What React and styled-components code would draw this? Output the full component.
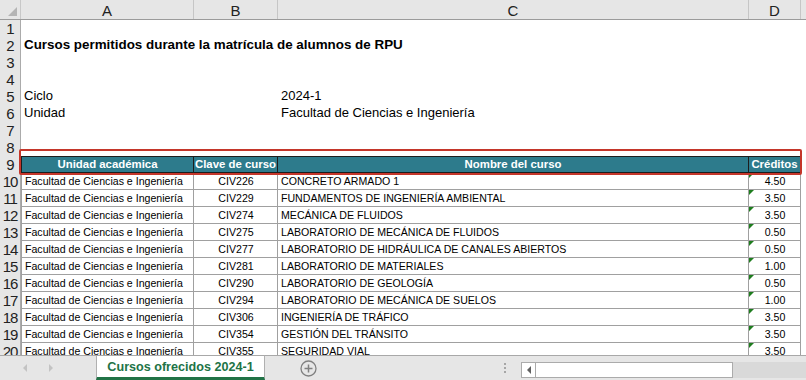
import React from "react";
import styled, { createGlobalStyle } from "styled-components";

const GlobalStyle = createGlobalStyle`
  html, body { margin: 0; padding: 0; background: #ffffff; overflow: hidden; }
  * { box-sizing: border-box; }
`;

const COLS = "21px 173px 84px 471px 52px 1fr";

const Window = styled.div`
  width: 806px;
  height: 380px;
  display: flex;
  flex-direction: column;
  font-family: "Liberation Sans", Arial, sans-serif;
  color: #000;
  overflow: hidden;
`;

const ColHeaderRow = styled.div`
  display: grid;
  grid-template-columns: ${COLS};
  height: 20px;
  flex: none;
  background: #e6e6e6;
  border-bottom: 1px solid #9b9b9b;
`;

const Corner = styled.div`
  position: relative;
  border-right: 1px solid #c8c8c8;
  &::after {
    content: "";
    position: absolute;
    right: 3px;
    bottom: 3px;
    width: 0;
    height: 0;
    border-left: 9px solid transparent;
    border-bottom: 9px solid #b4b4b4;
  }
`;

const ColLetter = styled.div`
  display: flex;
  align-items: center;
  justify-content: center;
  font-size: 15px;
  color: #222;
  padding-top: 1px;
  border-right: ${(p) => (p.$last ? "none" : "1px solid #c6c6c6")};
`;

const SheetBody = styled.div`
  position: relative;
  flex: 1;
  overflow: hidden;
`;

const Row = styled.div`
  display: grid;
  grid-template-columns: ${COLS};
  height: 17px;
`;

const RowNum = styled.div`
  background: #e6e6e6;
  border-right: 1px solid #ababab;
  display: flex;
  align-items: center;
  justify-content: center;
  font-size: 15px;
  letter-spacing: -1px;
  color: #222;
`;

const Cell = styled.div`
  display: flex;
  align-items: center;
  padding: 0 3px 2px;
  white-space: nowrap;
  overflow: visible;
  font-size: ${(p) => (p.$bold ? "13.4px" : "13px")};
  font-weight: ${(p) => (p.$bold ? 700 : 400)};
`;

const HeadCell = styled.div`
  display: flex;
  align-items: center;
  justify-content: center;
  background: #2d7b8c;
  color: #ffffff;
  font-weight: 700;
  font-size: 11.4px;
  white-space: nowrap;
  border-top: 1px solid #1d1d1d;
  border-bottom: 1px solid #1d1d1d;
  border-right: 1px solid #1d1d1d;
  border-left: ${(p) => (p.$first ? "1px solid #1d1d1d" : "none")};
  padding-bottom: 1px;
`;

const DataCell = styled.div`
  position: relative;
  display: flex;
  align-items: center;
  justify-content: ${(p) => (p.$align === "center" ? "center" : "flex-start")};
  padding: 0 2px 1px 3px;
  font-size: 10.6px;
  white-space: nowrap;
  overflow: hidden;
  border-right: 1px solid #a0a0a0;
  border-bottom: 1px solid #a0a0a0;
  border-left: ${(p) => (p.$first ? "1px solid #a0a0a0" : "none")};
`;

const Flag = styled.span`
  position: absolute;
  left: 0;
  top: 0;
  width: 0;
  height: 0;
  border-top: 5px solid #1e7d1e;
  border-right: 5px solid transparent;
`;

const Highlight = styled.div`
  position: absolute;
  left: 19px;
  top: 129px;
  width: 783px;
  height: 26px;
  border: 2px solid #c4362a;
  border-radius: 2px;
  pointer-events: none;
`;

const TabBar = styled.div`
  flex: none;
  height: 25px;
  display: flex;
  background: #e6e6e6;
  border-top: 1px solid #a8a8a8;
`;

const Nav = styled.div`
  width: 96px;
  display: flex;
  align-items: center;
  padding-left: 23px;
  gap: 22px;
`;

const Arrow = styled.span`
  width: 0;
  height: 0;
  border-top: 4px solid transparent;
  border-bottom: 4px solid transparent;
  ${(p) =>
    p.$dir === "left"
      ? "border-right: 4px solid #c3c3c3;"
      : "border-left: 4px solid #c3c3c3;"}
`;

const Tab = styled.div`
  width: 169px;
  margin-top: -1px;
  background: #ffffff;
  border-left: 1px solid #b0b0b0;
  border-right: 1px solid #b0b0b0;
  border-top: 1px solid #a8a8a8;
  border-bottom: 3px solid #217346;
  display: flex;
  align-items: center;
  justify-content: center;
  color: #217346;
  font-weight: 700;
  font-size: 12.6px;
  padding-top: 1px;
`;

const AddArea = styled.div`
  width: 86px;
  display: flex;
  align-items: center;
  justify-content: center;
`;

const Spacer = styled.div`
  flex: 1;
`;

const Handle = styled.div`
  width: 14px;
  display: flex;
  flex-direction: column;
  align-items: center;
  justify-content: center;
  gap: 2px;
  margin-right: 9px;
  span {
    width: 2px;
    height: 2px;
    background: #a6a6a6;
  }
`;

const Scroll = styled.div`
  flex: none;
  width: 212px;
  height: 16px;
  margin-top: 6px;
  background: #ffffff;
  border: 1px solid #ababab;
  display: flex;
`;

const ScrollBtn = styled.div`
  width: 14px;
  border-right: 1px solid #ababab;
  display: flex;
  align-items: center;
  justify-content: center;
  span {
    width: 0;
    height: 0;
    border-top: 4px solid transparent;
    border-bottom: 4px solid transparent;
    border-right: 4px solid #606060;
  }
`;

const Track = styled.div`
  flex: none;
  width: 73px;
  height: 16px;
  margin-top: 6px;
  background: #d9d9d9;
`;

const rows = [
  ["10", "CIV226", "CONCRETO ARMADO 1", "4.50"],
  ["11", "CIV229", "FUNDAMENTOS DE INGENIERÍA AMBIENTAL", "3.50"],
  ["12", "CIV274", "MECÁNICA DE FLUIDOS", "3.50"],
  ["13", "CIV275", "LABORATORIO DE MECÁNICA DE FLUIDOS", "0.50"],
  ["14", "CIV277", "LABORATORIO DE HIDRÁULICA DE CANALES ABIERTOS", "0.50"],
  ["15", "CIV281", "LABORATORIO DE MATERIALES", "1.00"],
  ["16", "CIV290", "LABORATORIO DE GEOLOGÍA", "0.50"],
  ["17", "CIV294", "LABORATORIO DE MECÁNICA DE SUELOS", "1.00"],
  ["18", "CIV306", "INGENIERÍA DE TRÁFICO", "3.50"],
  ["19", "CIV354", "GESTIÓN DEL TRÁNSITO", "3.50"],
  ["20", "CIV355", "SEGURIDAD VIAL", "3.50"],
];

const PlusIcon = () => (
  <svg width="17" height="17" viewBox="0 0 17 17">
    <circle cx="8.5" cy="8.5" r="7.5" fill="none" stroke="#808080" strokeWidth="1.3" />
    <path d="M8.5 4.5v8M4.5 8.5h8" stroke="#808080" strokeWidth="1.5" />
  </svg>
);

export default function App() {
  return (
    <Window>
      <GlobalStyle />
      <ColHeaderRow>
        <Corner />
        <ColLetter>A</ColLetter>
        <ColLetter>B</ColLetter>
        <ColLetter>C</ColLetter>
        <ColLetter>D</ColLetter>
        <ColLetter $last />
      </ColHeaderRow>
      <SheetBody>
        <Row>
          <RowNum>1</RowNum>
        </Row>
        <Row>
          <RowNum>2</RowNum>
          <Cell $bold>Cursos permitidos durante la matrícula de alumnos de RPU</Cell>
        </Row>
        <Row>
          <RowNum>3</RowNum>
        </Row>
        <Row>
          <RowNum>4</RowNum>
        </Row>
        <Row>
          <RowNum>5</RowNum>
          <Cell>Ciclo</Cell>
          <Cell />
          <Cell>2024-1</Cell>
        </Row>
        <Row>
          <RowNum>6</RowNum>
          <Cell>Unidad</Cell>
          <Cell />
          <Cell>Facultad de Ciencias e Ingeniería</Cell>
        </Row>
        <Row>
          <RowNum>7</RowNum>
        </Row>
        <Row>
          <RowNum>8</RowNum>
        </Row>
        <Row>
          <RowNum>9</RowNum>
          <HeadCell $first>Unidad académica</HeadCell>
          <HeadCell>Clave de curso</HeadCell>
          <HeadCell>Nombre del curso</HeadCell>
          <HeadCell>Créditos</HeadCell>
        </Row>
        {rows.map(([n, code, name, cr]) => (
          <Row key={n}>
            <RowNum>{n}</RowNum>
            <DataCell $first>Facultad de Ciencias e Ingeniería</DataCell>
            <DataCell $align="center">{code}</DataCell>
            <DataCell>{name}</DataCell>
            <DataCell $align="center">
              <Flag />
              {cr}
            </DataCell>
          </Row>
        ))}
        <Highlight />
      </SheetBody>
      <TabBar>
        <Nav>
          <Arrow $dir="left" />
          <Arrow $dir="right" />
        </Nav>
        <Tab>Cursos ofrecidos 2024-1</Tab>
        <AddArea>
          <PlusIcon />
        </AddArea>
        <Spacer />
        <Handle>
          <span />
          <span />
          <span />
        </Handle>
        <Scroll>
          <ScrollBtn>
            <span />
          </ScrollBtn>
        </Scroll>
        <Track />
      </TabBar>
    </Window>
  );
}
